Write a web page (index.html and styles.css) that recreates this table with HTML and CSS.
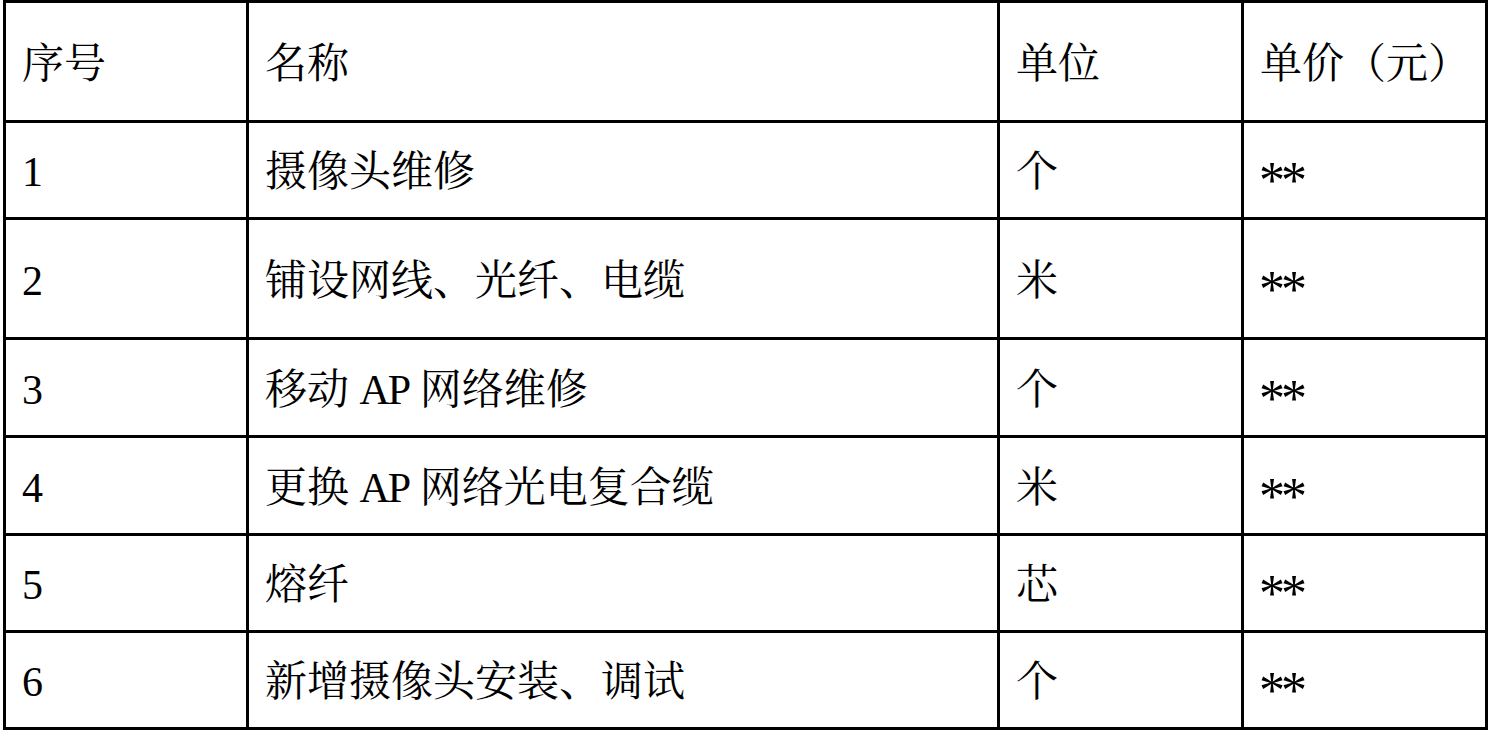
FILE: index.html
```html
<!DOCTYPE html>
<html lang="zh-CN">
<head>
<meta charset="utf-8">
<title>价格表</title>
<link rel="stylesheet" href="styles.css">
</head>
<body>
<div class="page">
  <div class="table" role="table">
    <div class="cell head">序号</div>
    <div class="cell head">名称</div>
    <div class="cell head">单位</div>
    <div class="cell head">单价（元）</div>

    <div class="cell">1</div>
    <div class="cell">摄像头维修</div>
    <div class="cell">个</div>
    <div class="cell price">**</div>

    <div class="cell">2</div>
    <div class="cell">铺设网线、光纤、电缆</div>
    <div class="cell">米</div>
    <div class="cell price">**</div>

    <div class="cell">3</div>
    <div class="cell"><span>移动 <span class="latin">AP</span> 网络维修</span></div>
    <div class="cell">个</div>
    <div class="cell price">**</div>

    <div class="cell">4</div>
    <div class="cell"><span>更换 <span class="latin">AP</span> 网络光电复合缆</span></div>
    <div class="cell">米</div>
    <div class="cell price">**</div>

    <div class="cell">5</div>
    <div class="cell">熔纤</div>
    <div class="cell">芯</div>
    <div class="cell price">**</div>

    <div class="cell">6</div>
    <div class="cell">新增摄像头安装、调试</div>
    <div class="cell">个</div>
    <div class="cell price">**</div>
  </div>
</div>
</body>
</html>
```
FILE: styles.css
```css
html, body {
  margin: 0;
  padding: 0;
  background: #ffffff;
}

.page {
  padding: 0 0 0 3px;
}

.table {
  display: grid;
  grid-template-columns: 243px 751px 244px 244px;
  grid-template-rows: 120px 97px 120px 98px 98px 97px 97px;
  width: max-content;
  border-left: 3px solid #000;
  border-top: 3px solid #000;
  font-family: "Liberation Serif", "Noto Serif CJK SC", "Noto Sans CJK SC", serif;
  font-size: 42px;
  color: #000;
}

.cell {
  box-sizing: border-box;
  border-right: 3px solid #000;
  border-bottom: 3px solid #000;
  display: flex;
  align-items: center;
  padding-left: 16px;
  padding-top: 4px;
  white-space: nowrap;
  line-height: 1;
}

.latin {
  letter-spacing: -2px;
}

.price {
  font-size: 52px;
  letter-spacing: -4px;
  padding-left: 15px;
  padding-top: 22px;
}
```
